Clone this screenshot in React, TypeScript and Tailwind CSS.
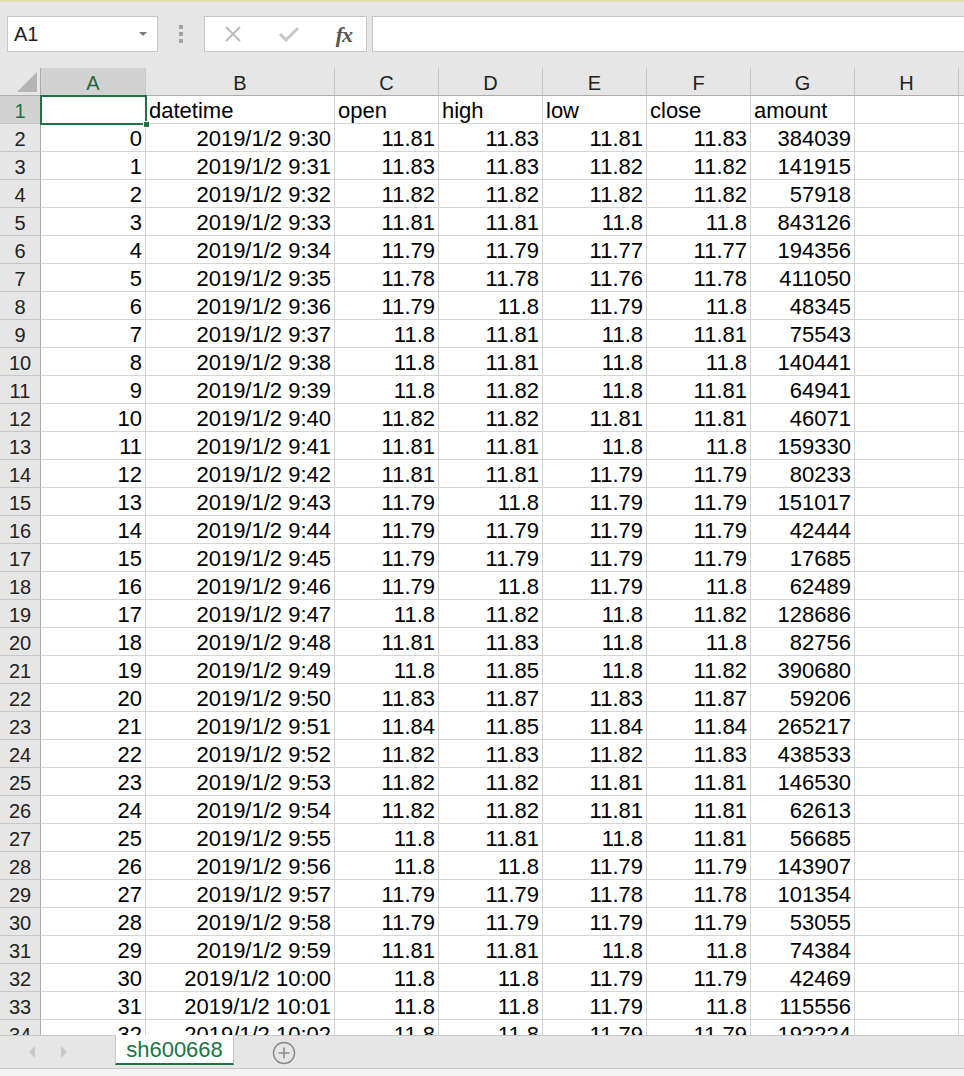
import React from 'react';

type Row = [number, string, string, string, string, string, string];

const ROWS: Row[] = [
  [0, '9:30', '11.81', '11.83', '11.81', '11.83', '384039'],
  [1, '9:31', '11.83', '11.83', '11.82', '11.82', '141915'],
  [2, '9:32', '11.82', '11.82', '11.82', '11.82', '57918'],
  [3, '9:33', '11.81', '11.81', '11.8', '11.8', '843126'],
  [4, '9:34', '11.79', '11.79', '11.77', '11.77', '194356'],
  [5, '9:35', '11.78', '11.78', '11.76', '11.78', '411050'],
  [6, '9:36', '11.79', '11.8', '11.79', '11.8', '48345'],
  [7, '9:37', '11.8', '11.81', '11.8', '11.81', '75543'],
  [8, '9:38', '11.8', '11.81', '11.8', '11.8', '140441'],
  [9, '9:39', '11.8', '11.82', '11.8', '11.81', '64941'],
  [10, '9:40', '11.82', '11.82', '11.81', '11.81', '46071'],
  [11, '9:41', '11.81', '11.81', '11.8', '11.8', '159330'],
  [12, '9:42', '11.81', '11.81', '11.79', '11.79', '80233'],
  [13, '9:43', '11.79', '11.8', '11.79', '11.79', '151017'],
  [14, '9:44', '11.79', '11.79', '11.79', '11.79', '42444'],
  [15, '9:45', '11.79', '11.79', '11.79', '11.79', '17685'],
  [16, '9:46', '11.79', '11.8', '11.79', '11.8', '62489'],
  [17, '9:47', '11.8', '11.82', '11.8', '11.82', '128686'],
  [18, '9:48', '11.81', '11.83', '11.8', '11.8', '82756'],
  [19, '9:49', '11.8', '11.85', '11.8', '11.82', '390680'],
  [20, '9:50', '11.83', '11.87', '11.83', '11.87', '59206'],
  [21, '9:51', '11.84', '11.85', '11.84', '11.84', '265217'],
  [22, '9:52', '11.82', '11.83', '11.82', '11.83', '438533'],
  [23, '9:53', '11.82', '11.82', '11.81', '11.81', '146530'],
  [24, '9:54', '11.82', '11.82', '11.81', '11.81', '62613'],
  [25, '9:55', '11.8', '11.81', '11.8', '11.81', '56685'],
  [26, '9:56', '11.8', '11.8', '11.79', '11.79', '143907'],
  [27, '9:57', '11.79', '11.79', '11.78', '11.78', '101354'],
  [28, '9:58', '11.79', '11.79', '11.79', '11.79', '53055'],
  [29, '9:59', '11.81', '11.81', '11.8', '11.8', '74384'],
  [30, '10:00', '11.8', '11.8', '11.79', '11.79', '42469'],
  [31, '10:01', '11.8', '11.8', '11.79', '11.8', '115556'],
  [32, '10:02', '11.8', '11.8', '11.79', '11.79', '192224'],
];

const COLS = ['A', 'B', 'C', 'D', 'E', 'F', 'G', 'H', ''];
const HEADERS = ['', 'datetime', 'open', 'high', 'low', 'close', 'amount', '', ''];

// row header + A..H + partial I
const GRID = 'grid grid-cols-[41px_105px_189px_104px_104px_104px_104px_104px_104px_1fr]';

const cell = 'h-[28px] border-r border-b border-[#d4d4d4] flex items-end leading-[24px] px-[3px] whitespace-nowrap overflow-hidden';
const rowHead = 'h-[28px] border-r border-r-[#ababab] border-b border-b-[#c6c6c6] flex items-end justify-center leading-[24px] text-[20px]';

const NameBox = () => (
  <div className="w-[151px] h-[36px] bg-white border border-[#c6c6c6] flex items-center justify-between pl-[6px] pr-[9px]">
    <span className="text-[20px] text-[#222]">A1</span>
    <svg width="10" height="6" viewBox="0 0 10 6"><path d="M1 1h8L5 5z" fill="#7a7a7a" /></svg>
  </div>
);

const FormulaIcons = () => (
  <div className="w-[163px] h-[36px] bg-white border border-[#c6c6c6] flex items-center pl-[18px] pr-[14px] justify-between">
    <svg width="20" height="20" viewBox="0 0 20 20"><path d="M3 3l14 14M17 3L3 17" stroke="#bdbdbd" strokeWidth="2" fill="none" /></svg>
    <svg width="22" height="18" viewBox="0 0 22 18"><path d="M2 9l6 6L20 3" stroke="#c8c8c8" strokeWidth="3" fill="none" /></svg>
    <span className="text-[22px] italic text-[#555] font-['Liberation_Serif',serif] font-bold tracking-[-1px]">fx</span>
  </div>
);

export default function App() {
  return (
    <div className="w-[964px] h-[1076px] flex flex-col overflow-hidden bg-white font-['Liberation_Sans',Arial,sans-serif] text-[22px] text-black">
      {/* toolbar */}
      <div className="h-[68px] shrink-0 bg-[#e6e6e6] border-t-2 border-[#e3e0b4] flex items-start pt-[14px] pl-[7px]">
        <NameBox />
        <div className="w-[46px] h-[36px] flex flex-col items-center justify-center gap-[3px]">
          <span className="w-[4px] h-[4px] bg-[#a3a3a3]" />
          <span className="w-[4px] h-[4px] bg-[#a3a3a3]" />
          <span className="w-[4px] h-[4px] bg-[#a3a3a3]" />
        </div>
        <FormulaIcons />
        <div className="flex-1 ml-[5px] h-[36px] bg-white border-y border-l border-[#c6c6c6]" />
      </div>

      {/* sheet */}
      <div className="flex-1 overflow-hidden relative">
        <div className={GRID}>
          <div className="h-[28px] bg-[#e6e6e6] border-r border-b border-[#ababab] flex items-end justify-end pr-[3px] pb-[3px]">
            <svg width="20" height="20" viewBox="0 0 20 20"><path d="M20 0V20H0z" fill="#b4b4b4" /></svg>
          </div>
          {COLS.map((c, i) => (
            <div
              key={i}
              className={`h-[28px] border-b border-b-[#ababab] border-r border-r-[#c6c6c6] flex items-end justify-center leading-[24px] text-[20px] ${i === 0 ? 'bg-[#d2d2d2] text-[#1e6b40]' : 'bg-[#e6e6e6] text-[#222]'}`}
            >
              {c}
            </div>
          ))}

          {/* row 1 */}
          <div className={`${rowHead} bg-[#d2d2d2] text-[#217346]`}>1</div>
          {HEADERS.map((h, i) => (
            <div key={i} className={cell}>{h}</div>
          ))}

          {ROWS.map((r, idx) => (
            <React.Fragment key={idx}>
              <div className={`${rowHead} bg-[#e6e6e6] text-[#222]`}>{idx + 2}</div>
              <div className={`${cell} justify-end`}>{r[0]}</div>
              <div className={`${cell} justify-end`}>2019/1/2 {r[1]}</div>
              <div className={`${cell} justify-end`}>{r[2]}</div>
              <div className={`${cell} justify-end`}>{r[3]}</div>
              <div className={`${cell} justify-end`}>{r[4]}</div>
              <div className={`${cell} justify-end`}>{r[5]}</div>
              <div className={`${cell} justify-end`}>{r[6]}</div>
              <div className={cell} />
              <div className={cell} />
            </React.Fragment>
          ))}
        </div>
        {/* active cell selection */}
        <div className="absolute left-[40px] top-[27px] w-[107px] h-[30px] border-2 border-[#217346] pointer-events-none">
          <div className="absolute -right-[5px] -bottom-[5px] w-[7px] h-[7px] bg-[#217346] border border-white" />
        </div>
      </div>

      {/* sheet tabs */}
      <div className="h-[33px] shrink-0 bg-[#e6e6e6] border-t border-[#c6c6c6] flex items-start">
        <div className="w-[115px] h-full flex items-center pl-[27px] gap-[22px]">
          <svg width="10" height="14" viewBox="0 0 10 14"><path d="M8 1L2 7l6 6z" fill="#c8c8c8" /></svg>
          <svg width="10" height="14" viewBox="0 0 10 14"><path d="M2 1l6 6-6 6z" fill="#c8c8c8" /></svg>
        </div>
        <div className="w-[119px] h-[30px] -mt-px bg-white border-x border-[#c6c6c6] border-b-2 border-b-[#217346] flex items-center justify-center text-[22px] text-[#217346]">
          sh600668
        </div>
        <div className="ml-[38px] mt-[5px]">
          <svg width="24" height="24" viewBox="0 0 24 24">
            <circle cx="12" cy="12" r="10.5" stroke="#8a8a8a" strokeWidth="1.5" fill="none" />
            <path d="M12 6.5v11M6.5 12h11" stroke="#8a8a8a" strokeWidth="1.6" />
          </svg>
        </div>
      </div>
      <div className="h-[8px] shrink-0 bg-[#f3f3f3] border-t border-[#c6c6c6]" />
    </div>
  );
}
